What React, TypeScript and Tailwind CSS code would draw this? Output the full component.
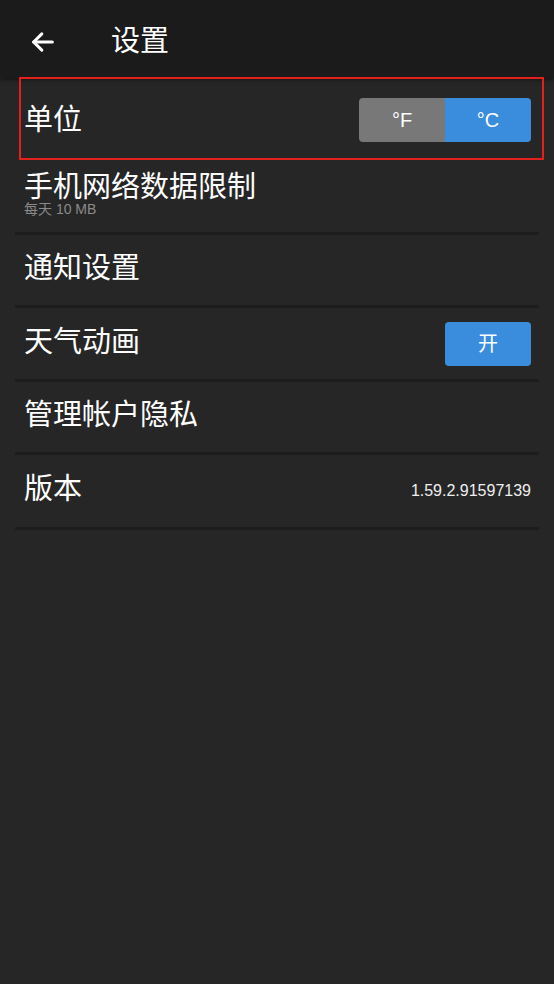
import React from "react";

const font = { fontFamily: '"Liberation Sans", "Noto Sans CJK SC", sans-serif' };

function Row({ children, h }: { children: React.ReactNode; h: string }) {
  return (
    <div className={`${h} flex items-center justify-between pl-[9px] pr-[8px] border-b-[3px] border-[#1d1d1d]`}>
      {children}
    </div>
  );
}

export default function App() {
  return (
    <div className="relative min-h-[984px] w-full bg-[#262626] text-white" style={font}>
      <header className="relative z-10 h-[78px] bg-[#1b1b1b] flex items-center pt-[4px] shadow-[0_2px_4px_rgba(0,0,0,0.45)]">
        <svg className="ml-[29px] mt-[2px]" width="28" height="28" viewBox="0 0 24 24" fill="none" stroke="white" strokeWidth="2.6" strokeLinecap="round" strokeLinejoin="round">
          <path d="M20 12H4" />
          <path d="M11 5l-7 7 7 7" />
        </svg>
        <div className="ml-[54px] text-[29px] leading-none">设置</div>
      </header>

      <main className="px-[15px]">
        <div className="h-[82px] flex items-center justify-between pl-[9px] pr-[8px]">
          <div className="text-[29px] leading-none mt-[3px]">单位</div>
          <div className="flex h-[44px] w-[172px] rounded-[4px] overflow-hidden mt-[2px]">
            <div className="flex-1 bg-[#787878] flex items-center justify-center text-[20px]">°F</div>
            <div className="flex-1 bg-[#3a8ddd] flex items-center justify-center text-[20px]">°C</div>
          </div>
        </div>

        <div className="h-[75px] flex flex-col justify-start px-[9px] pt-[13px] border-b-[3px] border-[#1d1d1d]">
          <div className="text-[29px] leading-[29px]">手机网络数据限制</div>
          <div className="text-[14px] leading-[14px] text-[#8a8a8a]">每天 10 MB</div>
        </div>

        <Row h="h-[73px]">
          <div className="text-[29px] leading-none -mt-[4px]">通知设置</div>
        </Row>
        <Row h="h-[74px]">
          <div className="text-[29px] leading-none -mt-[2px]">天气动画</div>
          <div className="h-[44px] w-[86px] rounded-[4px] bg-[#3a8ddd] flex items-center justify-center text-[20px]">开</div>
        </Row>
        <Row h="h-[73px]">
          <div className="text-[29px] leading-none -mt-[4px]">管理帐户隐私</div>
        </Row>
        <Row h="h-[75px]">
          <div className="text-[29px] leading-none -mt-[4px]">版本</div>
          <div className="text-[16px] leading-none text-[#eeeeee]">1.59.2.91597139</div>
        </Row>
      </main>

      <div className="absolute left-[19px] top-[77px] w-[525px] h-[83px] border-2 border-[#e3201c] z-20 pointer-events-none" />
    </div>
  );
}
